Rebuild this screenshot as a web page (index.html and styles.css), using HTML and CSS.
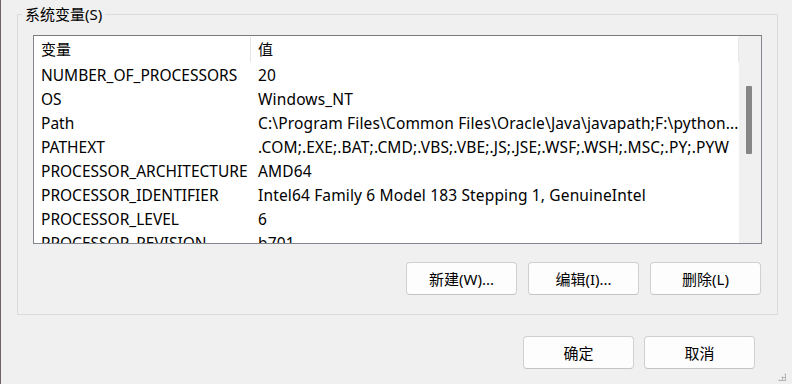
FILE: index.html
```html
<!DOCTYPE html>
<html lang="zh-CN">

<head>
  <meta charset="UTF-8" />
  <title>环境变量</title>
  <link rel="stylesheet" href="styles.css">
</head>

<body>

<div class="window">
  <!-- Groupe : variables système -->
  <fieldset class="group">
    <legend>系统变量(S)</legend>

    <div class="list">
      <div class="list-view">
        <div class="list-header">
          <div class="col-name">变量</div>
          <div class="col-value">值</div>
        </div>
        <div class="row"><div class="col-name">NUMBER_OF_PROCESSORS</div><div class="col-value">20</div></div>
        <div class="row"><div class="col-name">OS</div><div class="col-value">Windows_NT</div></div>
        <div class="row"><div class="col-name">Path</div><div class="col-value">C:\Program Files\Common Files\Oracle\Java\javapath;F:\python...</div></div>
        <div class="row"><div class="col-name">PATHEXT</div><div class="col-value">.COM;.EXE;.BAT;.CMD;.VBS;.VBE;.JS;.JSE;.WSF;.WSH;.MSC;.PY;.PYW</div></div>
        <div class="row"><div class="col-name">PROCESSOR_ARCHITECTURE</div><div class="col-value">AMD64</div></div>
        <div class="row"><div class="col-name">PROCESSOR_IDENTIFIER</div><div class="col-value">Intel64 Family 6 Model 183 Stepping 1, GenuineIntel</div></div>
        <div class="row"><div class="col-name">PROCESSOR_LEVEL</div><div class="col-value">6</div></div>
        <div class="row"><div class="col-name">PROCESSOR_REVISION</div><div class="col-value">b701</div></div>
      </div>
      <div class="scrollbar">
        <div class="thumb"></div>
      </div>
    </div>

    <div class="actions">
      <button type="button">新建(W)...</button>
      <button type="button">编辑(I)...</button>
      <button type="button">删除(L)</button>
    </div>
  </fieldset>

  <!-- Boutons du dialogue -->
  <div class="dialog-actions">
    <button type="button">确定</button>
    <button type="button">取消</button>
  </div>

  <div class="grip"></div>
</div>

</body>
</html>
```

FILE: styles.css
```css
html,
body {
  margin: 0;
  height: 100%;
}
body {
  background: #f0f0f0;
  font-family: "Noto Sans", "Noto Sans CJK SC", sans-serif;
  font-size: 15.5px;
  color: #000;
}
.window {
  position: relative;
  height: 384px;
  box-sizing: border-box;
  border-left: 1px solid #6e6262;
  padding: 6px 0 0 16px;
}
.group {
  width: 761px;
  height: 309px;
  box-sizing: border-box;
  margin: 0;
  padding: 15px 15px 0 15px;
  border: 1px solid #dcdcdc;
  border-radius: 0;
}
.group legend {
  margin-left: -11px;
  padding: 0 3px 0 3px;
  line-height: 16px;
  margin-top: -1px;
  font-size: 15px;
}
.list {
  display: flex;
  height: 207px;
  border: 1px solid #828790;
  border-top-color: #7a7a7a;
  background: #fff;
  overflow: hidden;
  margin-top: -2px;
}
.list-view {
  flex: 1;
  overflow: hidden;
}
.list-header,
.row {
  display: flex;
  white-space: nowrap;
}
.list-header {
  height: 27px;
  align-items: center;
}
.row {
  height: 24px;
  align-items: center;
}
.col-name {
  width: 217px;
  padding-left: 7px;
  box-sizing: border-box;
  flex: none;
}
.col-value {
  flex: 1;
  padding-left: 7px;
  overflow: hidden;
  letter-spacing: 0.15px;
}
.list-header .col-name {
  border-right: 1px solid #e5e5e5;
  height: 25px;
  line-height: 25px;
  font-size: 15px;
}
.list-header .col-value {
  border-right: 1px solid #e5e5e5;
  height: 25px;
  line-height: 25px;
  padding-left: 7px;
  font-size: 15px;
}
.scrollbar {
  width: 22px;
  flex: none;
  background: #f0f0f0;
  padding-top: 50px;
  box-sizing: border-box;
}
.thumb {
  width: 6px;
  height: 68px;
  margin-left: 7px;
  background: #868686;
  border-radius: 1px;
}
.actions,
.dialog-actions {
  display: flex;
  justify-content: flex-end;
  gap: 11px;
}
.actions {
  margin-top: 18px;
  padding-right: 1px;
}
.dialog-actions {
  margin-top: 21px;
  padding-right: 37px;
  gap: 10px;
}
button {
  width: 111px;
  height: 33px;
  border: 1px solid #d0d0d0;
  border-bottom-color: #c4c4c4;
  border-radius: 4px;
  background: #fdfdfd;
  font-family: "Noto Sans", "Noto Sans CJK SC", sans-serif;
  font-size: 15px;
  color: #000;
  padding: 0;
}
.grip {
  position: absolute;
  right: 6px;
  bottom: 3px;
  width: 8px;
  height: 8px;
  background:
    radial-gradient(circle, #b4b4b4 1px, transparent 1.2px) 0 0 / 3px 3px;
  clip-path: polygon(100% 0, 100% 100%, 0 100%);
}
```
